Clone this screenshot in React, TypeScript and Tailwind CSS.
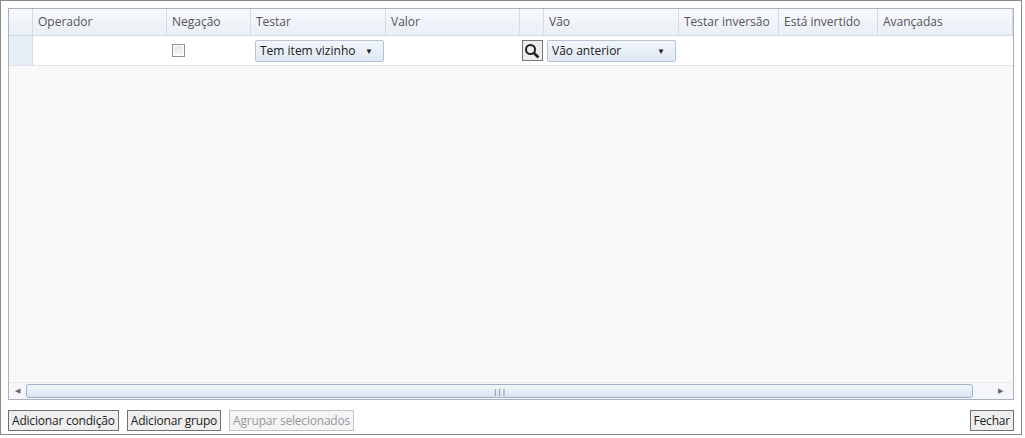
export default function App() {
  const cols = [
    { w: 24, t: "" },
    { w: 134, t: "Operador" },
    { w: 84, t: "Negação" },
    { w: 135, t: "Testar" },
    { w: 134, t: "Valor" },
    { w: 24, t: "" },
    { w: 135, t: "Vão" },
    { w: 100, t: "Testar inversão" },
    { w: 99, t: "Está invertido" },
    { w: 135, t: "Avançadas" },
  ];
  const Combo = ({ label }: { label: string }) => (
    <div className="w-[129px] h-[22px] border border-[#b4c3d6] rounded-[2px] bg-gradient-to-b from-[#f2f6fb] to-[#dfe8f3] flex items-center justify-between px-[4px] text-[12px] text-[#222]">
      <span>{label}</span>
      <span className="text-[8px] mr-[6px]">▼</span>
    </div>
  );
  return (
    <div className="w-[1025px] h-[438px] bg-white" style={{ fontFamily: '"Open Sans", "Noto Sans", sans-serif' }}>
      <div className="w-[1022px] h-[435px] border border-[#8a8a8a] flex flex-col">
        <div className="mx-[7px] mt-[7px] h-[392px] border border-[#a9b3bf] bg-[#f9f9f9] flex flex-col relative">
          <div className="flex h-[27px] bg-gradient-to-b from-[#f7f9fc] to-[#eaeff6] border-b border-[#d3dbe5]">
            {cols.map((c, i) => (
              <div key={i} style={{ width: c.w }} className="shrink-0 border-r border-[#d3dbe5] pl-[5px] text-[12px] text-[#555] flex items-center">
                {c.t}
              </div>
            ))}
          </div>
          <div className="flex h-[30px] bg-white border-b border-[#dfe5ec]">
            <div className="w-[24px] shrink-0 bg-[#e8eef6] border-r border-[#d3dbe5]" />
            <div className="w-[134px] shrink-0" />
            <div className="w-[84px] shrink-0 flex items-center pl-[5px]">
              <div className="w-[13px] h-[13px] border border-[#8e8f8f] bg-gradient-to-b from-[#e6e6e6] to-[#f8f8f8] shadow-[inset_0_0_0_1px_#fff]" />
            </div>
            <div className="w-[135px] shrink-0 flex items-center pl-[4px]"><Combo label="Tem item vizinho" /></div>
            <div className="w-[134px] shrink-0" />
            <div className="w-[24px] shrink-0 flex items-center justify-center">
              <div className="w-[21px] h-[21px] border border-[#777] bg-[#eee] flex items-center justify-center">
                <svg width="16" height="16" viewBox="0 0 16 16"><circle cx="6.5" cy="6.5" r="4.5" stroke="#222" strokeWidth="2" fill="none" /><line x1="10" y1="10" x2="14.5" y2="14.5" stroke="#222" strokeWidth="2.6" /></svg>
              </div>
            </div>
            <div className="w-[135px] shrink-0 flex items-center pl-[3px]"><Combo label="Vão anterior" /></div>
          </div>
          <div className="flex-1" />
          <div className="h-[17px] flex items-center bg-[#f4f6f9] border-t border-[#e8ecf0]">
            <div className="w-[17px] text-[7px] text-[#666] text-center">◀</div>
            <div className="flex-1 h-[14px] border border-[#9eb1c8] rounded-[3px] bg-gradient-to-b from-[#f3f7fc] to-[#d9e5f3] flex items-center justify-center text-[8px] text-[#555]">|||</div>
            <div className="w-[40px] text-[7px] text-[#666] text-right pr-[10px]">▶</div>
          </div>
        </div>
        <div className="flex items-center mt-[10px] px-[7px] gap-[8px] text-[12px] tracking-[-0.2px]">
          <button className="h-[21px] px-[3px] border border-[#707070] bg-[#eee] text-[#222]">Adicionar condição</button>
          <button className="h-[21px] px-[3px] border border-[#707070] bg-[#eee] text-[#222]">Adicionar grupo</button>
          <button className="h-[21px] px-[3px] border border-[#c5c5c5] bg-[#f4f4f4] text-[#999]">Agrupar selecionados</button>
          <div className="flex-1" />
          <button className="h-[21px] px-[3px] border border-[#707070] bg-[#eee] text-[#222]">Fechar</button>
        </div>
      </div>
    </div>
  );
}
